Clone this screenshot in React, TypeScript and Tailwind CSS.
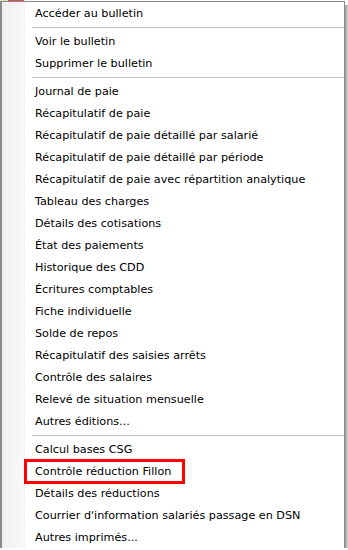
import React from "react";

type Entry = { t: string } | "sep";

const entries: Entry[] = [
  { t: "Accéder au bulletin" },
  "sep",
  { t: "Voir le bulletin" },
  { t: "Supprimer le bulletin" },
  "sep",
  { t: "Journal de paie" },
  { t: "Récapitulatif de paie" },
  { t: "Récapitulatif de paie détaillé par salarié" },
  { t: "Récapitulatif de paie détaillé par période" },
  { t: "Récapitulatif de paie avec répartition analytique" },
  { t: "Tableau des charges" },
  { t: "Détails des cotisations" },
  { t: "État des paiements" },
  { t: "Historique des CDD" },
  { t: "Écritures comptables" },
  { t: "Fiche individuelle" },
  { t: "Solde de repos" },
  { t: "Récapitulatif des saisies arrêts" },
  { t: "Contrôle des salaires" },
  { t: "Relevé de situation mensuelle" },
  { t: "Autres éditions..." },
  "sep",
  { t: "Calcul bases CSG" },
  { t: "Contrôle réduction Fillon" },
  { t: "Détails des réductions" },
  { t: "Courrier d'information salariés passage en DSN" },
  { t: "Autres imprimés..." },
];

export default function App() {
  return (
    <div
      className="relative w-[348px] h-[550px] overflow-hidden bg-white text-[11.2px] text-black"
      style={{ fontFamily: '"DejaVu Sans", Tahoma, sans-serif' }}
    >
      <div className="flex h-px">
        <div className="w-[8px] bg-[#cfe3b8]" />
        <div className="w-[16px] bg-[#e2454b]" />
        <div className="flex-1 bg-white" />
      </div>
      <div className="flex">
        <div className="w-[345px] border-t border-l-2 border-r border-[#8a8a8a] bg-white flex">
          <div className="w-[23px] shrink-0 bg-gradient-to-r from-[#efefef] to-[#f9f9f9] border-r border-[#f2f2f2]" />
          <div className="flex-1 flex flex-col">
            {entries.map((e, i) =>
              e === "sep" ? (
                <div key={i} className="h-[6px] flex items-center pl-[7px]">
                  <div className="h-px w-full bg-[#c5c5c5] mt-[1px]" />
                </div>
              ) : (
                <div key={i} className="h-[22px] flex items-center pl-[10px] pt-[2px] whitespace-nowrap">
                  {e.t}
                </div>
              )
            )}
          </div>
        </div>
        <div className="w-[3px] mt-[4px] bg-gradient-to-r from-[#9a9a9a] to-[#d8d8d8]" />
      </div>
      <div className="absolute left-[24px] top-[459px] w-[161px] h-[25px] border-[3px] border-[#ff0000]" />
    </div>
  );
}
